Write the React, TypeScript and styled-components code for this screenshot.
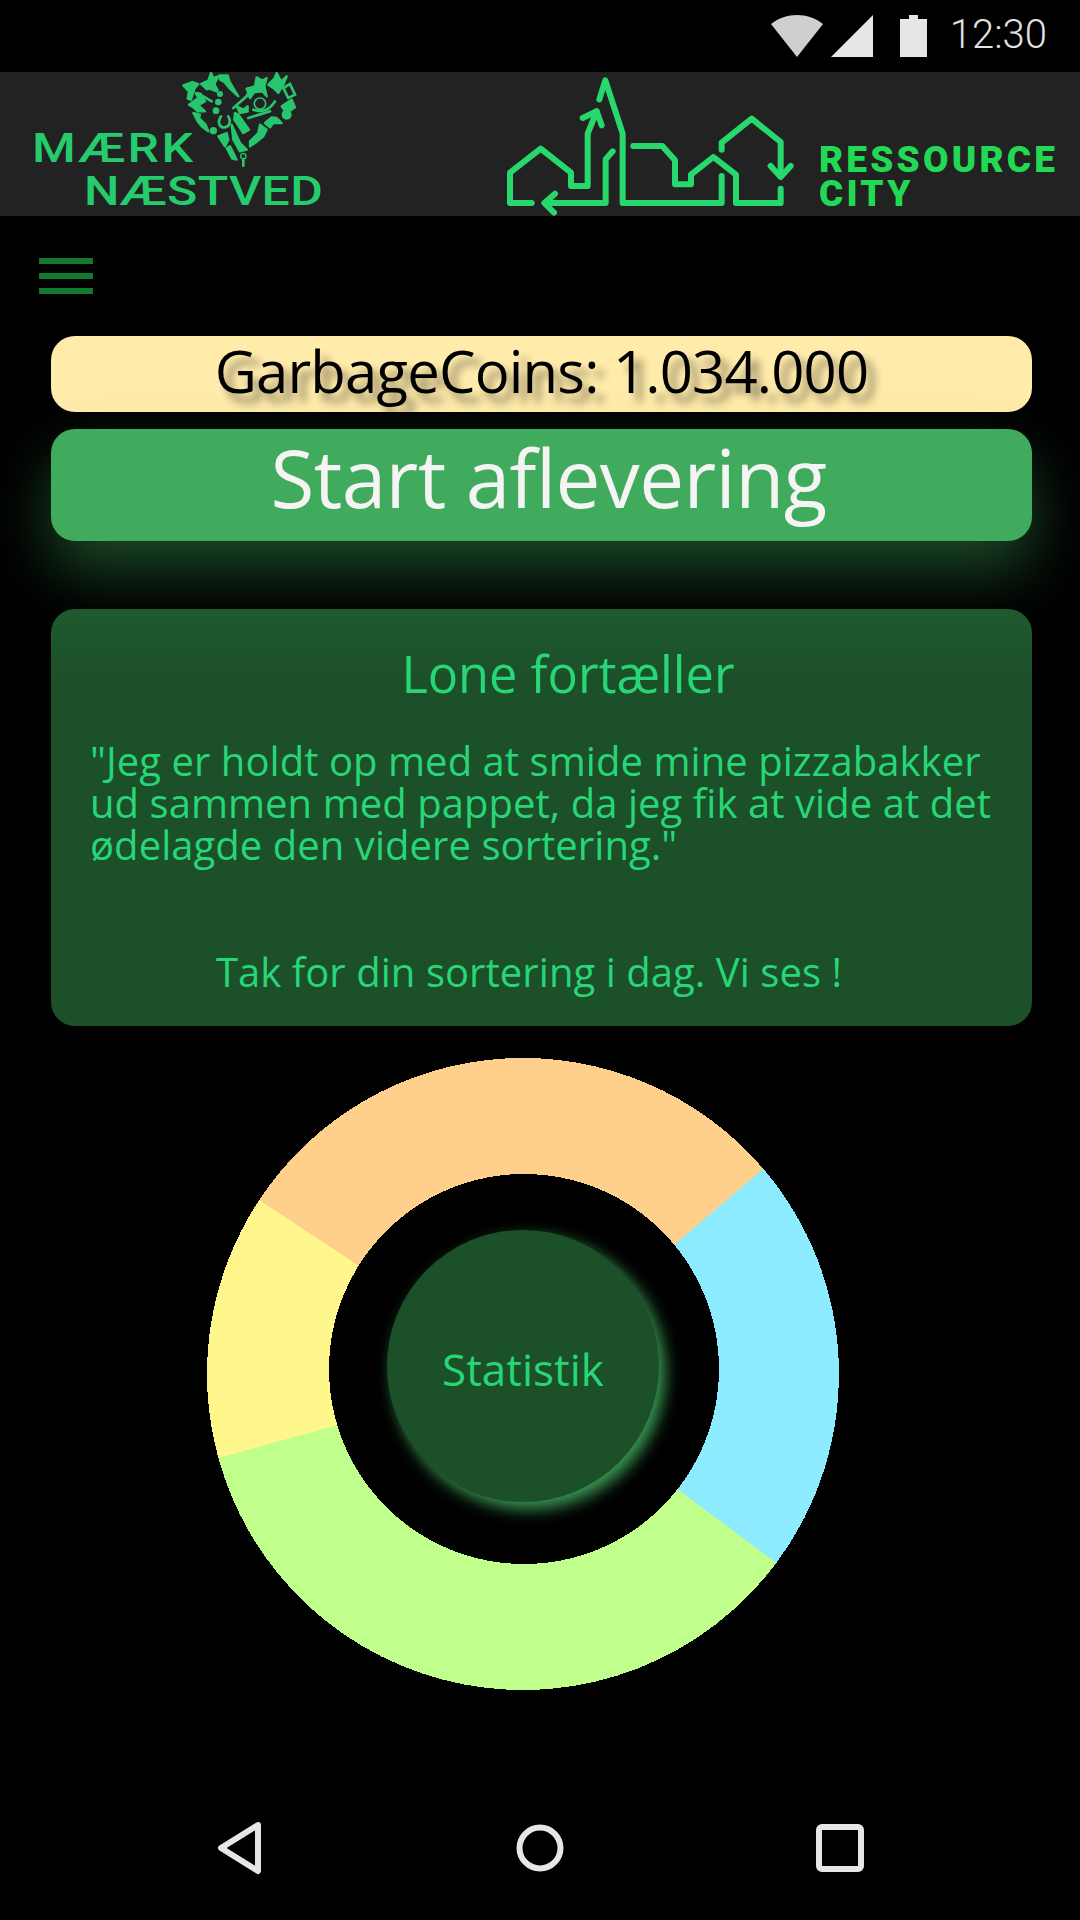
import styled, { createGlobalStyle } from "styled-components";

const GlobalStyle = createGlobalStyle`
  * { box-sizing: border-box; }
  html, body { margin: 0; padding: 0; background: #000; }
  body { font-family: "Open Sans", "Noto Sans", sans-serif; }
`;

const Screen = styled.div`
  width: 1080px;
  height: 1920px;
  display: flex;
  flex-direction: column;
  background: #000;
  overflow: hidden;
`;

const StatusBar = styled.div`
  height: 72px;
  display: flex;
  align-items: flex-start;
  justify-content: flex-end;
  padding: 15px 33px 0 0;
  flex: none;
`;

const StatusIcon = styled.svg<{ $gap: number }>`
  display: block;
  margin-right: ${(p) => p.$gap}px;
`;

const Clock = styled.span`
  font-family: Roboto, sans-serif;
  font-weight: 300;
  font-size: 40px;
  line-height: 42px;
  color: #e2e2e2;
  margin-top: -1px;
`;

const Header = styled.header`
  height: 144px;
  flex: none;
  background: #222;
  display: flex;
  align-items: flex-start;
`;

const MaerkLogo = styled.div`
  position: relative;
  width: 500px;
  height: 144px;
  padding: 55px 0 0 32px;
  color: #25cc6e;
  font-family: Roboto, sans-serif;
  font-weight: 500;
  font-size: 41px;
  line-height: 43px;
  flex: none;
`;

const MaerkLine = styled.div<{ $indent: number; $spacing: number }>`
  margin-left: ${(p) => p.$indent}px;
  letter-spacing: ${(p) => p.$spacing}px;
  white-space: nowrap;
  transform: scaleX(1.22);
  transform-origin: left center;
`;

const Heart = styled.svg`
  position: absolute;
  left: 175px;
  top: -4px;
`;

const CityMark = styled.svg`
  display: block;
  flex: none;
`;

const CityName = styled.div`
  margin: 71px 0 0 19px;
  font-family: Roboto, sans-serif;
  font-weight: 900;
  font-size: 37px;
  line-height: 34px;
  letter-spacing: 3.2px;
  color: #22d955;
  white-space: nowrap;
`;

const Main = styled.main`
  flex: 1;
  display: flex;
  flex-direction: column;
  padding: 42px 48px 0 51px;
`;

const Burger = styled.div`
  width: 54px;
  height: 36px;
  margin-left: -12px;
  display: flex;
  flex-direction: column;
  justify-content: space-between;
`;

const BurgerBar = styled.span`
  height: 6px;
  background: #137a31;
`;

const CoinsBar = styled.div`
  height: 76px;
  margin-top: 42px;
  border-radius: 24px;
  background: #ffebaa;
  color: #000;
  font-size: 58px;
  line-height: 70px;
  text-align: center;
  letter-spacing: -0.8px;
  text-shadow: 8px 9px 8px rgba(0, 0, 0, 0.45);
`;

const StartButton = styled.button`
  height: 112px;
  margin-top: 17px;
  border: 0;
  padding: 0 0 22px 14px;
  border-radius: 24px;
  background: #41ab5d;
  color: #f4f4f4;
  font-family: inherit;
  font-weight: 400;
  font-size: 80px;
  line-height: 96px;
  letter-spacing: -0.6px;
  box-shadow: 0 30px 60px rgba(65, 171, 93, 0.42);
`;

const StoryCard = styled.section`
  height: 417px;
  margin-top: 68px;
  border-radius: 24px;
  background: linear-gradient(#1f5a2e, #1c5029 70px);
  color: #27d677;
  padding: 31px 40px 0 39px;
`;

const StoryTitle = styled.h2`
  margin: 0;
  padding-left: 54px;
  font-weight: 400;
  font-size: 50.5px;
  line-height: 68px;
  text-align: center;
`;

const StoryQuote = styled.p`
  margin: 32px 0 0;
  font-size: 40px;
  line-height: 42px;
  letter-spacing: 0.05px;
  white-space: nowrap;
`;

const StoryThanks = styled.p`
  margin: 85px 0 0;
  padding-right: 24px;
  font-size: 40px;
  line-height: 42px;
  letter-spacing: 0.05px;
  text-align: center;
`;

const ChartWrap = styled.div`
  position: relative;
  width: 640px;
  height: 640px;
  margin: 28px 0 0 152px;
`;

const Ring = styled.svg`
  display: block;
`;

const CenterButton = styled.div`
  position: absolute;
  left: 184px;
  top: 176px;
  width: 272px;
  height: 272px;
  border-radius: 50%;
  background: #1c5029;
  color: #27d677;
  font-size: 44px;
  display: flex;
  align-items: center;
  justify-content: center;
  padding-top: 6px;
  box-shadow: 6px 7px 16px rgba(65, 171, 93, 0.9);
`;

const NavBar = styled.nav`
  height: 144px;
  flex: none;
  display: flex;
  justify-content: center;
  align-items: center;
  gap: 252px;
`;

const NavIcon = styled.svg`
  display: block;
`;

const segments = [
  { from: 303.4, to: 409.5, color: "#ffcf8c" },
  { from: 49.5, to: 126.7, color: "#8cebff" },
  { from: 126.7, to: 254.6, color: "#c0ff8c" },
  { from: 254.6, to: 303.4, color: "#fff68c" },
];

function sector(from: number, to: number) {
  const r = 316;
  const point = (deg: number) => {
    const a = (deg * Math.PI) / 180;
    return `${320 + r * Math.sin(a)} ${320 - r * Math.cos(a)}`;
  };
  return `M320 320 L${point(from)} A${r} ${r} 0 ${to - from > 180 ? 1 : 0} 1 ${point(to)} Z`;
}

const heartFills = [
  "M25 52 L52 42 L70 48 L58 62 L48 95 L38 92 L42 70 Z",
  "M78 48 L100 38 L108 15 L115 30 L130 25 L118 48 L128 66 L112 58 L96 64 Z",
  "M133 22 L158 22 L163 40 L190 85 L165 62 L148 42 L135 35 Z",
  "M42 110 L70 90 L62 75 L78 78 L90 100 L70 112 L90 130 L68 130 L55 118 Z",
  "M55 135 L75 140 L72 150 L92 170 L100 190 L80 175 L68 160 Z",
  "M215 62 L240 55 L245 28 L262 38 L275 30 L268 55 L275 85 L262 70 L238 72 L225 90 Z",
  "M280 50 L298 32 L305 15 L318 40 L335 25 L325 50 L310 75 L295 60 Z",
  "M185 115 L205 125 L218 115 L218 130 L195 135 Z",
  "M180 135 L190 140 L222 185 L205 195 L178 155 Z",
  "M320 115 L350 95 L360 118 L335 135 Z",
  "M270 165 L290 148 L305 150 L320 165 L295 165 L285 178 Z",
  "M225 220 L250 195 L255 170 L275 185 L265 205 L240 225 L225 235 Z",
  "M170 170 L195 225 L215 245 L195 250 L175 215 Z",
  "M130 205 L155 195 L160 215 L150 235 Z",
  "M165 235 L185 275 L172 272 L155 240 Z",
];

const heartLines = [
  "M85 85 L110 100",
  "M100 60 L125 70",
  "M138 145 C125 165 135 180 150 178 C165 175 168 158 160 145",
  "M175 120 L215 85",
  "M325 60 L345 48 L360 80 L340 90 Z",
  "M235 125 C260 135 285 125 300 100",
  "M220 150 L285 130",
  "M205 273 L205 293",
];

const heartDots = [
  [135, 78, 9],
  [130, 102, 10],
  [123, 128, 10],
  [115, 188, 11],
  [218, 82, 6],
  [335, 140, 15],
];

const cityLines = [
  "M95 393 H30 V302 L122 230 L213 302 V342 H263 V185 L290 118",
  "M248 138 L290 118 L305 160",
  "M338 238 L317 262 V393 H136",
  "M165 365 L133 393 L162 422",
  "M298 82 L316 25 L368 185 V393 H665 V312",
  "M400 222 H487 L525 265 V337 H573 V308 L640 255 L708 308 V393 H842 V350",
  "M665 233 V212 L755 140 L842 210 V312",
  "M812 282 L842 315 L872 282",
];

export default function App() {
  return (
    <>
      <GlobalStyle />
      <Screen>
        <StatusBar>
          <StatusIcon $gap={8} width="52" height="42" viewBox="0 0 52 42">
            <path d="M26 42 L0 9 C15 -3 37 -3 52 9 Z" fill="#cfcfcf" />
          </StatusIcon>
          <StatusIcon $gap={27} width="42" height="42" viewBox="0 0 42 42">
            <path d="M0 42 L42 0 V42 Z" fill="#e6e6e6" />
          </StatusIcon>
          <StatusIcon $gap={23} width="27" height="42" viewBox="0 0 27 42">
            <path d="M9 0 H18 V4 H27 V42 H0 V4 H9 Z" fill="#e6e6e6" />
          </StatusIcon>
          <Clock>12:30</Clock>
        </StatusBar>

        <Header>
          <MaerkLogo>
            <MaerkLine $indent={0} $spacing={2}>MÆRK</MaerkLine>
            <MaerkLine $indent={52} $spacing={0.3}>NÆSTVED</MaerkLine>
            <Heart width="130" height="105" viewBox="0 0 390 315">
              {heartFills.map((d) => (
                <path key={d} d={d} fill="#27c56e" stroke="#27c56e" strokeWidth="7" strokeLinejoin="round" />
              ))}
              {heartLines.map((d) => (
                <path key={d} d={d} fill="none" stroke="#27c56e" strokeWidth="8" strokeLinecap="round" />
              ))}
              {heartDots.map(([cx, cy, r]) => (
                <circle key={`${cx}-${cy}`} cx={cx} cy={cy} r={r} fill="#27c56e" />
              ))}
              <circle cx="255" cy="107" r="17" fill="none" stroke="#27c56e" strokeWidth="5" />
              <circle cx="205" cy="265" r="8" fill="none" stroke="#27c56e" strokeWidth="4" />
            </Heart>
          </MaerkLogo>
          <CityMark width="300" height="144" viewBox="0 0 900 432">
            {cityLines.map((d) => (
              <path
                key={d}
                d={d}
                fill="none"
                stroke="#27d96c"
                strokeWidth="18"
                strokeLinecap="round"
                strokeLinejoin="round"
              />
            ))}
          </CityMark>
          <CityName>
            RESSOURCE
            <br />
            CITY
          </CityName>
        </Header>

        <Main>
          <Burger>
            <BurgerBar />
            <BurgerBar />
            <BurgerBar />
          </Burger>
          <CoinsBar>GarbageCoins: 1.034.000</CoinsBar>
          <StartButton>Start aflevering</StartButton>
          <StoryCard>
            <StoryTitle>Lone fortæller</StoryTitle>
            <StoryQuote>
              "Jeg er holdt op med at smide mine pizzabakker
              <br />
              ud sammen med pappet, da jeg fik at vide at det
              <br />
              ødelagde den videre sortering."
            </StoryQuote>
            <StoryThanks>Tak for din sortering i dag. Vi ses !</StoryThanks>
          </StoryCard>
          <ChartWrap>
            <Ring width="640" height="640" viewBox="0 0 640 640" shapeRendering="crispEdges">
              {segments.map((s) => (
                <path key={s.color} d={sector(s.from, s.to)} fill={s.color} />
              ))}
              <circle cx="321" cy="315" r="195" fill="#000" />
            </Ring>
            <CenterButton>Statistik</CenterButton>
          </ChartWrap>
        </Main>

        <NavBar>
          <NavIcon width="48" height="54" viewBox="0 0 48 54">
            <path d="M42 4 L5 27 L42 50 Z" fill="none" stroke="#e6e6e6" strokeWidth="6" strokeLinejoin="round" />
          </NavIcon>
          <NavIcon width="48" height="48" viewBox="0 0 48 48">
            <circle cx="24" cy="24" r="20.5" fill="none" stroke="#e6e6e6" strokeWidth="6" />
          </NavIcon>
          <NavIcon width="48" height="48" viewBox="0 0 48 48">
            <rect x="3" y="3" width="42" height="42" rx="3" fill="none" stroke="#e6e6e6" strokeWidth="6" />
          </NavIcon>
        </NavBar>
      </Screen>
    </>
  );
}
